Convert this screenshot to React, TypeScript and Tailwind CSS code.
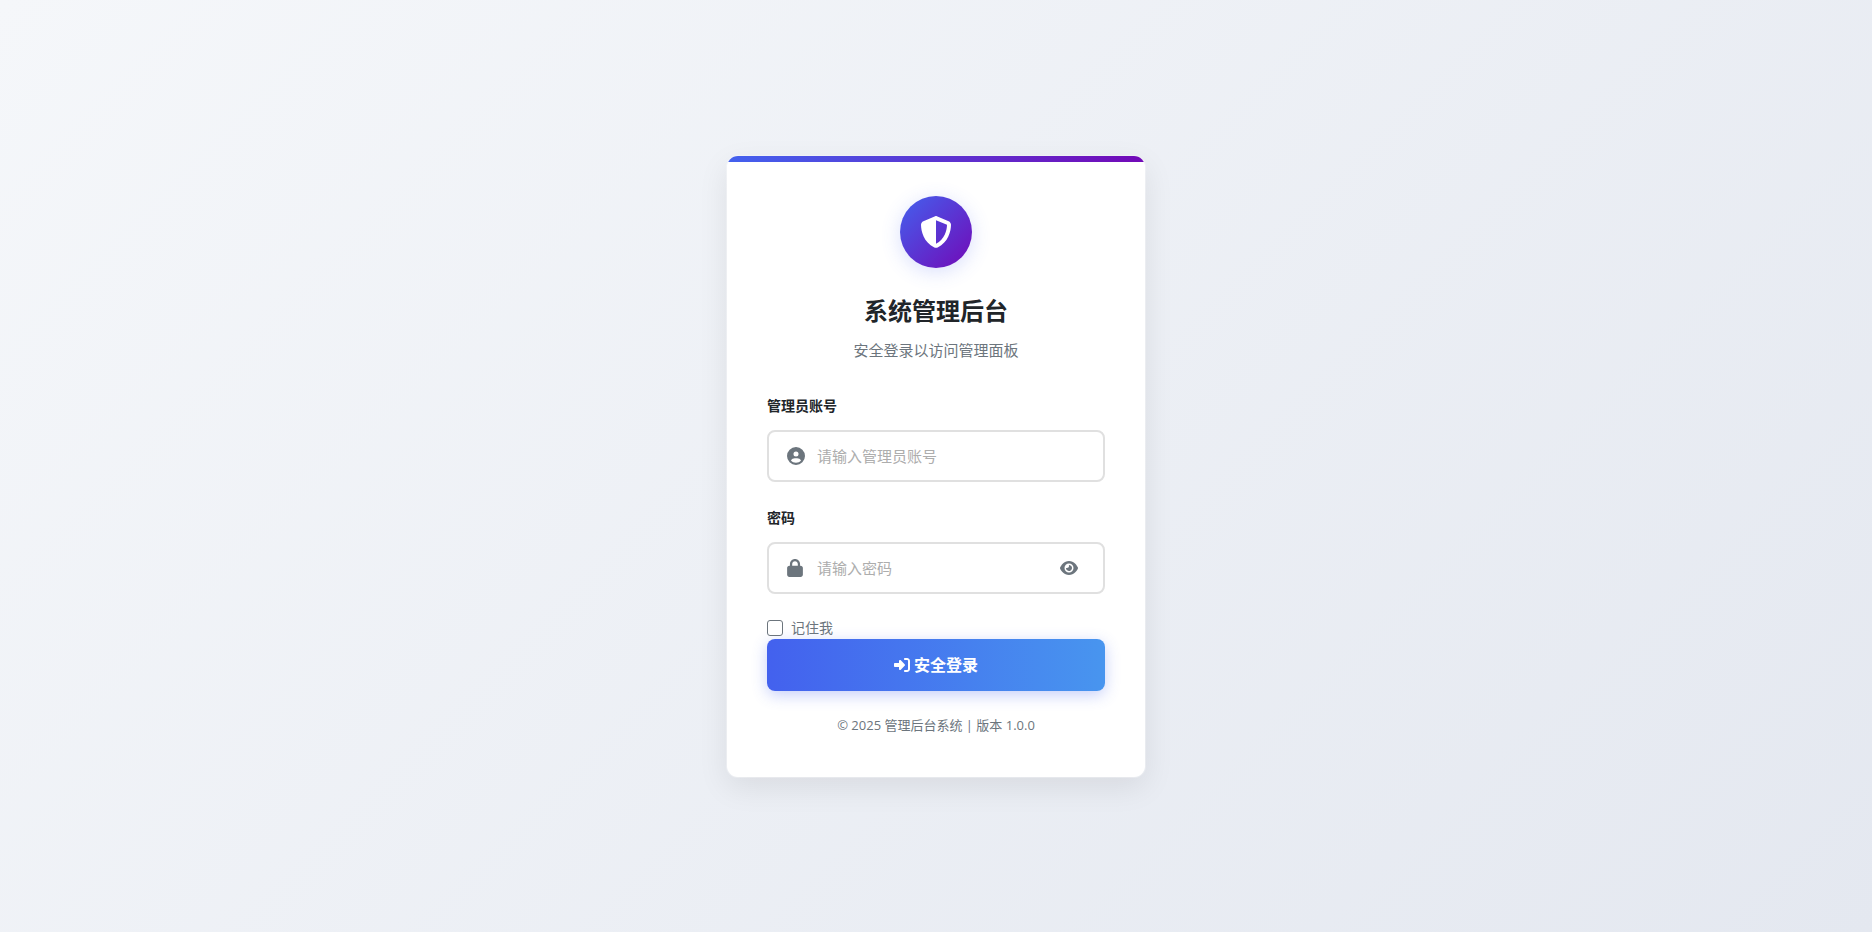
import { useState } from "react";
import type { FormEvent } from "react";
import { FaCircleUser, FaEye, FaEyeSlash, FaLock, FaRightToBracket, FaShieldHalved } from "react-icons/fa6";

const inputClass =
  "h-[52px] w-full rounded-lg border-2 border-[#e0e0e0] bg-white pl-12 text-[15px] text-[#212529] outline-none placeholder:text-[#adadad] focus:border-[#4361ee]";
const labelClass = "mb-[10px] block text-sm leading-7 font-semibold text-[#212529]";

export default function App() {
  const [username, setUsername] = useState("");
  const [password, setPassword] = useState("");
  const [remember, setRemember] = useState(false);
  const [showPassword, setShowPassword] = useState(false);

  const handleSubmit = (e: FormEvent) => {
    e.preventDefault();
  };

  return (
    <main className="flex min-h-screen items-center justify-center bg-[linear-gradient(135deg,#f5f7fa_0%,#e4e8f0_100%)] p-5 font-['Open_Sans','Noto_Sans_CJK_SC',sans-serif]">
      <div className="w-full max-w-[420px] overflow-hidden rounded-xl border border-white/30 bg-white bg-clip-padding shadow-[0_10px_30px_rgba(0,0,0,0.08)]">
        <div className="h-[6px] bg-[linear-gradient(90deg,#4361ee,#7209b7)]" />

        <div className="px-10 pt-[34px] pb-[42px]">
          {/* Header */}
          <div className="mb-[30px] text-center">
            <div className="mx-auto mb-6 flex h-[72px] w-[72px] items-center justify-center rounded-full bg-[linear-gradient(135deg,#4361ee,#7209b7)] text-white shadow-[0_4px_20px_rgba(67,97,238,0.2)]">
              <FaShieldHalved size={32} />
            </div>
            <h1 className="mb-2 text-2xl leading-[38px] font-bold text-[#212529]">系统管理后台</h1>
            <p className="text-[15px] leading-6 text-[#6c757d]">安全登录以访问管理面板</p>
          </div>

          <form onSubmit={handleSubmit}>
            <div className="mb-[22px]">
              <label htmlFor="username" className={labelClass}>管理员账号</label>
              <div className="relative">
                <FaCircleUser size={18} className="pointer-events-none absolute top-1/2 left-5 -translate-y-1/2 text-[#6c757d]" />
                <input id="username" type="text" value={username} onChange={(e) => setUsername(e.target.value)} placeholder="请输入管理员账号" className={`${inputClass} pr-4`} />
              </div>
            </div>

            <div className="mb-6">
              <label htmlFor="password" className={labelClass}>密码</label>
              <div className="relative">
                <FaLock className="pointer-events-none absolute top-1/2 left-5 h-[18px] w-4 -translate-y-1/2 text-[#6c757d]" />
                <input id="password" type={showPassword ? "text" : "password"} value={password} onChange={(e) => setPassword(e.target.value)} placeholder="请输入密码" className={`${inputClass} pr-14`} />
                <button
                  type="button"
                  aria-label={showPassword ? "隐藏密码" : "显示密码"}
                  onClick={() => setShowPassword(!showPassword)}
                  className="absolute top-1/2 right-5 -translate-y-1/2 cursor-pointer p-[7px] text-[#6c757d]"
                >
                  {showPassword ? <FaEyeSlash size={18} /> : <FaEye size={18} />}
                </button>
              </div>
            </div>

            <div className="flex h-[21px] items-center gap-2">
              <input
                id="remember"
                type="checkbox"
                checked={remember}
                onChange={(e) => setRemember(e.target.checked)}
                className="h-4 w-4 appearance-none rounded-[3px] border border-[#6c757d] bg-white checked:border-[#4361ee] checked:bg-[#4361ee]"
              />
              <label htmlFor="remember" className="text-sm text-[#6c757d]">记住我</label>
            </div>

            <button type="submit" className="flex h-[52px] w-full cursor-pointer items-center justify-center gap-1 rounded-lg bg-[linear-gradient(90deg,#4361ee,#4895ef)] text-base font-semibold text-white shadow-[0_4px_15px_rgba(67,97,238,0.3)]">
              <FaRightToBracket size={16} />
              安全登录
            </button>
          </form>

          <p className="mt-6 text-center text-[13px] leading-5 text-[#6c757d]">© 2025 管理后台系统 | 版本 1.0.0</p>
        </div>
      </div>
    </main>
  );
}
